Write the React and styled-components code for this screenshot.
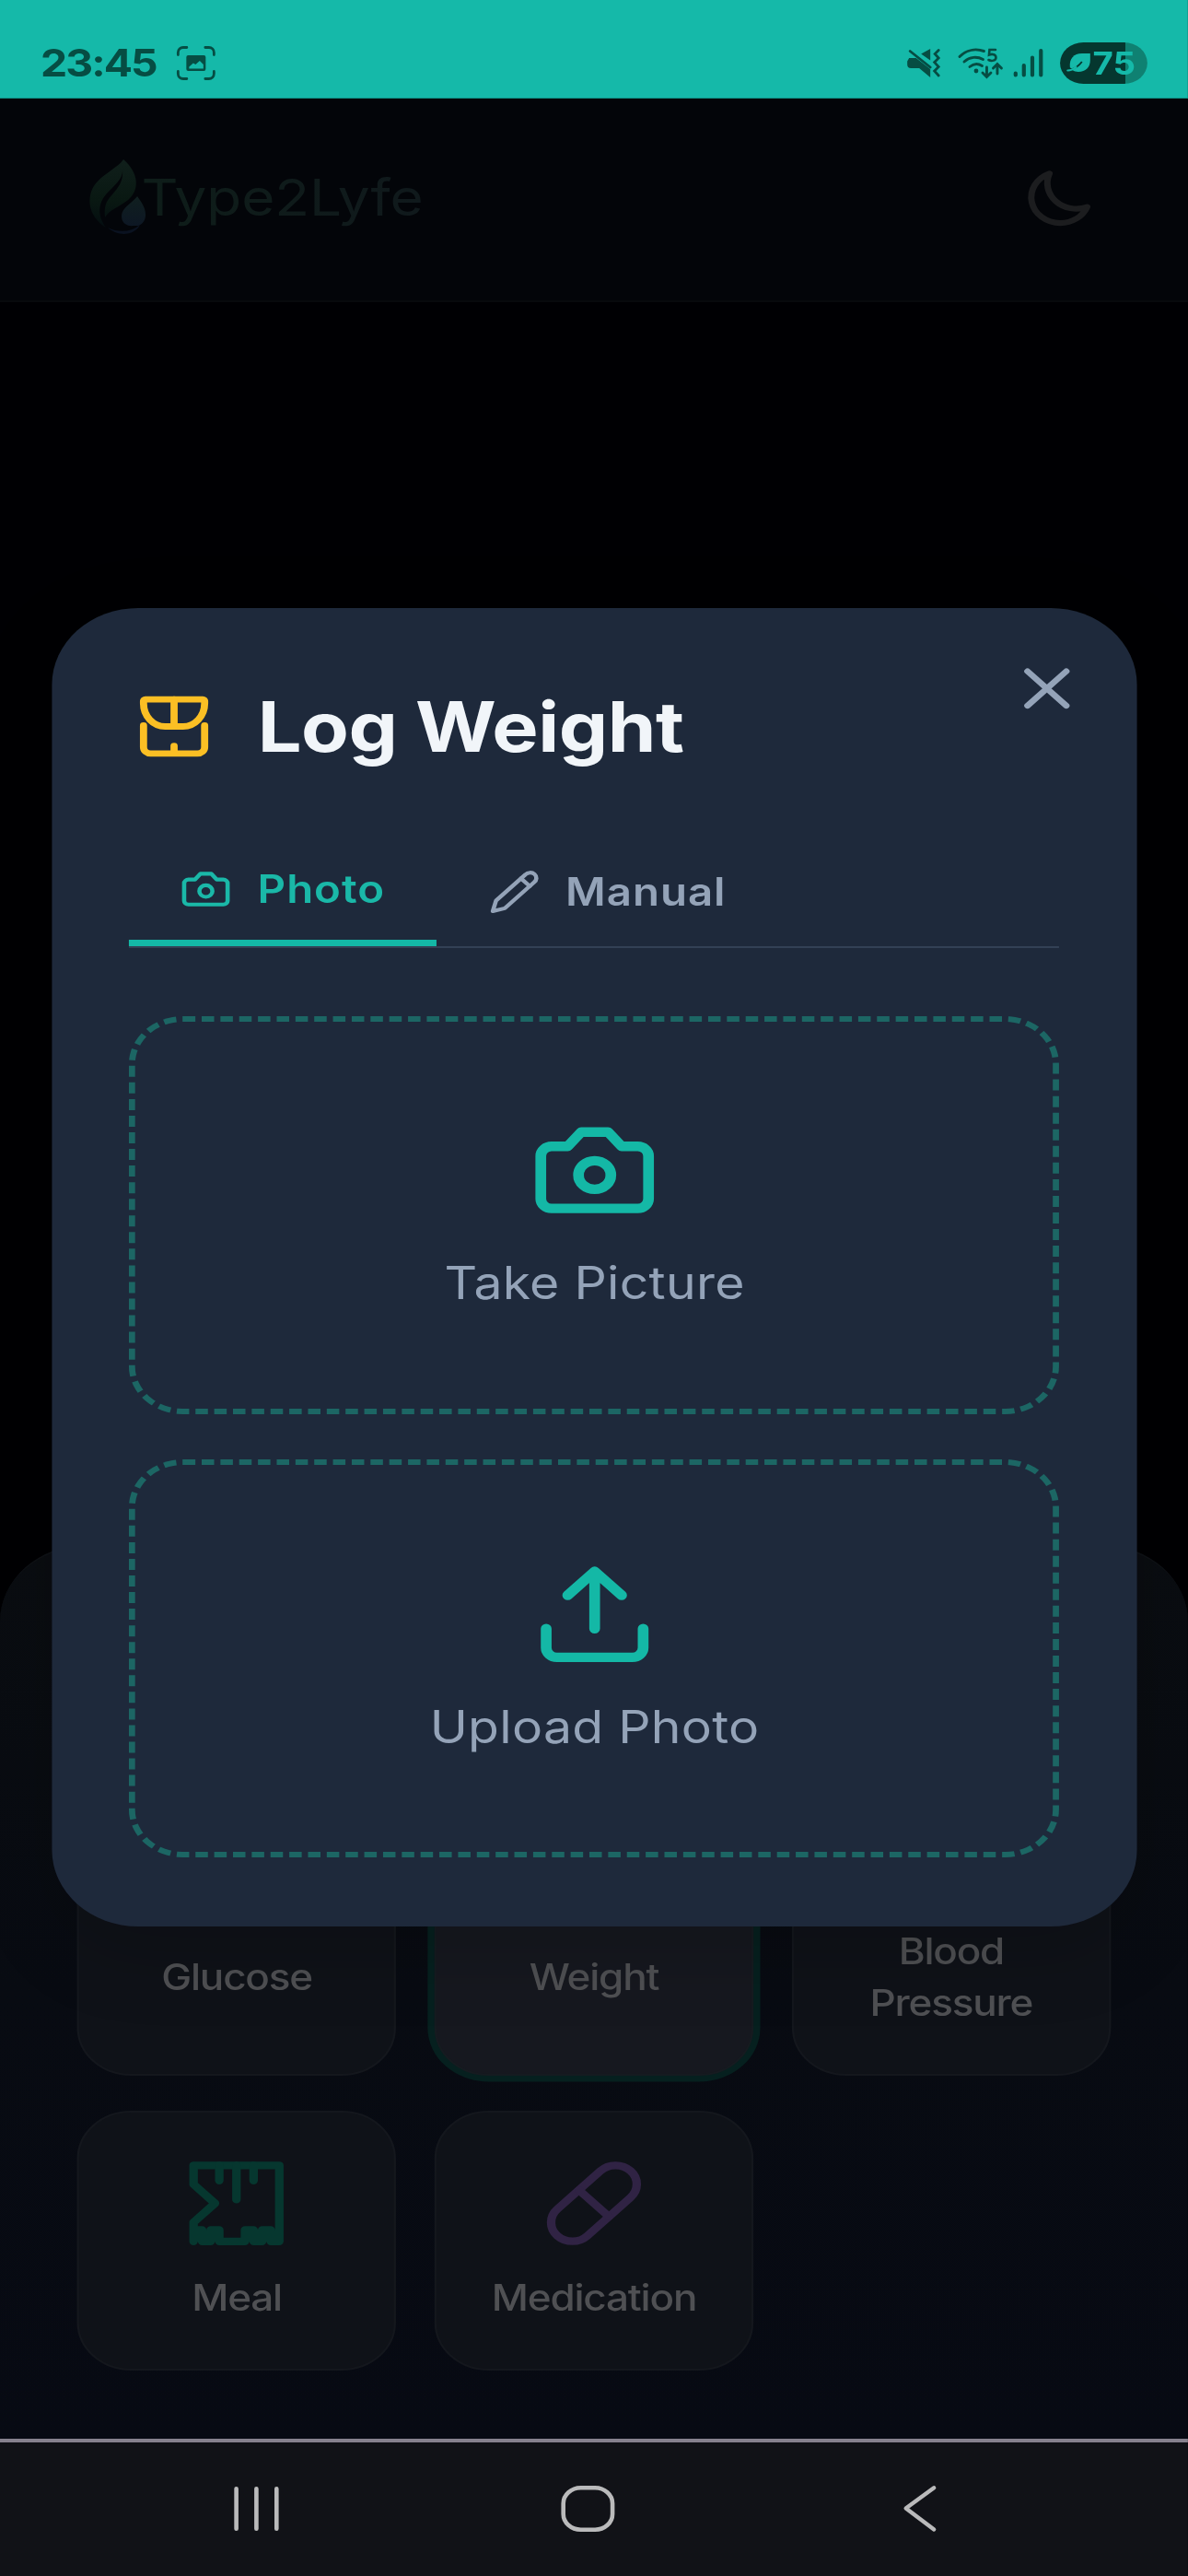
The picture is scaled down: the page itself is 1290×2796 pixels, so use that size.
import React from "react";
import styled, { createGlobalStyle } from "styled-components";

const STRETCH = 1.1285;
const w = (n) => `${(n / STRETCH).toFixed(2)}px`;

const GlobalStyle = createGlobalStyle`
  *, *::before, *::after { box-sizing: border-box; }
  html, body { margin: 0; padding: 0; background: #000003; }
  body { width: 1290px; height: 2796px; overflow: hidden; }
  button { font: inherit; color: inherit; background: none; border: 0; padding: 0; margin: 0; }
`;

const Screen = styled.div`
  position: relative;
  display: flex;
  flex-direction: column;
  width: ${w(1290)};
  height: 2796px;
  transform: scaleX(${STRETCH});
  transform-origin: 0 0;
  background: #000003;
  font-family: Inter, "Liberation Sans", sans-serif;
  overflow: hidden;
`;

/* ---------- status bar ---------- */
const StatusBar = styled.header`
  display: flex;
  align-items: center;
  height: 107px;
  flex: none;
  padding: 30px ${w(44)} 0 ${w(44)};
  background: #15b9a9;
  border-bottom: 1px solid #0e8f83;
  color: #064d43;
`;

const Clock = styled.span`
  width: ${w(148)};
  font-size: 41px;
  font-weight: 700;
  line-height: 44px;
  letter-spacing: -1.7px;
`;

const StatusIcons = styled.div`
  display: flex;
  align-items: center;
  margin-left: auto;
`;

const Glyph = styled.svg`
  display: block;
  flex: none;
  width: ${(p) => w(p.$w)};
  height: ${(p) => p.$h}px;
  margin-left: ${(p) => w(p.$gap || 0)};
  overflow: visible;
`;

const Battery = styled.div`
  display: flex;
  align-items: center;
  width: ${w(95)};
  height: 45px;
  margin-left: ${w(18)};
  padding-left: ${w(7)};
  border-radius: 23px;
  background: linear-gradient(90deg, #05372f 0 74.5%, #0f8172 74.5%);
  color: #15b9a9;
  font-size: 34px;
  font-weight: 700;
  line-height: 45px;
`;

const BatteryValue = styled.span`
  margin-left: ${w(1.5)};
`;

/* ---------- app header ---------- */
const AppBar = styled.div`
  display: flex;
  align-items: center;
  justify-content: space-between;
  flex: none;
  height: 221px;
  padding: 0 ${w(97)} 5px;
  background: #030509;
  border-bottom: 2px solid #07090c;
`;

const Brand = styled.div`
  display: flex;
  align-items: center;
`;

const BrandName = styled.span`
  margin-left: ${w(-7.5)};
  font-size: 55px;
  line-height: 66px;
  letter-spacing: -0.1px;
  background: linear-gradient(90deg, #0e1d19, #10191c);
  -webkit-background-clip: text;
  background-clip: text;
  color: transparent;
`;

const LineIcon = styled.svg`
  display: block;
  flex: none;
  width: ${(p) => p.$size}px;
  height: ${(p) => p.$size}px;
  fill: none;
  stroke: ${(p) => p.$color || "currentColor"};
  stroke-width: ${(p) => p.$stroke || 2};
  stroke-linecap: round;
  stroke-linejoin: round;
`;

/* ---------- bottom sheet with entry types ---------- */
const Body = styled.main`
  display: flex;
  flex-direction: column;
  justify-content: flex-end;
  flex: 1;
`;

const Sheet = styled.section`
  height: 970px;
  padding: 237px ${w(84)} 0;
  border-radius: 83px 83px 0 0;
  border-top: 2px solid #0f1216;
  background: linear-gradient(180deg, #0a0d11, #080b12 50%, #070a13);
`;

const Grid = styled.div`
  display: grid;
  grid-template-columns: repeat(3, 1fr);
  grid-template-rows: 337px 281.6px;
  gap: 38.4px 37px;
`;

const Card = styled.button`
  display: flex;
  flex-direction: column;
  align-items: center;
  justify-content: center;
  gap: 24.5px;
  padding: 0 40px 1px;
  border: 2px solid ${(p) => (p.$selected ? "#161b20" : "#14171d")};
  border-radius: 52px;
  background: ${(p) => (p.$selected ? "#16181f" : "#0f1218")};
  box-shadow: ${(p) => (p.$selected ? "0 0 0 6.5px #06201f" : "none")};
  color: #4f5053;
  font-size: 39px;
  font-weight: 500;
  line-height: 55.5px;
  letter-spacing: -1.05px;
`;

/* ---------- dialog ---------- */
const Overlay = styled.div`
  position: absolute;
  inset: 0;
  padding: 660px ${w(56)} 0;
`;

const Dialog = styled.section`
  position: relative;
  display: flex;
  flex-direction: column;
  height: 1430.6px;
  padding: 74.4px ${w(84)};
  border-radius: 83px;
  background: #1e293b;
  box-shadow: 0 26px 80px rgba(0, 0, 0, 0.18);
`;

const DialogHead = styled.div`
  display: flex;
  align-items: center;
  height: 110px;
  padding-left: ${w(2)};
`;

const Title = styled.h1`
  margin: 0 0 0 ${w(44)};
  color: #f1f5f9;
  font-size: 75px;
  font-weight: 700;
  line-height: 90px;
  letter-spacing: -0.4px;
`;

const CloseButton = styled.button`
  position: absolute;
  top: 49.5px;
  right: ${w(55)};
  color: #94a3b8;
`;

const Tabs = styled.nav`
  display: flex;
  height: 120.5px;
  margin-top: 66px;
  border-bottom: 2.4px solid #334155;
`;

const Tab = styled.button`
  display: flex;
  align-items: center;
  height: ${(p) => (p.$active ? 118 : 117)}px;
  width: ${(p) => w(p.$width)};
  padding-left: ${w(55.5)};
  gap: ${w(27.5)};
  border-bottom: ${(p) => (p.$active ? "7px solid #14b8a6" : "0 solid transparent")};
  color: ${(p) => (p.$active ? "#1ab8a8" : "#94a3b8")};
  font-size: 42px;
  font-weight: 600;
  line-height: 62px;
  letter-spacing: 0.85px;
`;

const Choices = styled.div`
  display: flex;
  flex-direction: column;
  gap: 49.5px;
  margin-top: 73.5px;
`;

const DropZone = styled.button`
  display: flex;
  flex-direction: column;
  align-items: center;
  justify-content: center;
  gap: 25px;
  height: 432px;
  padding-left: 1px;
  border: 6px dashed #1c6664;
  border-radius: 52px;
  color: #94a3b8;
  font-size: 49px;
  line-height: 72px;
  letter-spacing: 0.25px;
`;

/* ---------- system navigation ---------- */
const NavBar = styled.footer`
  display: flex;
  align-items: center;
  flex: none;
  height: 149px;
  padding: 0 0 2px ${w(254)};
  border-top: 4px solid #86818e;
  background: #111217;
`;

function CameraIcon(props) {
  return (
    <LineIcon viewBox="0 0 24 24" {...props}>
      <path d="M14.5 4h-5L7 7H4a2 2 0 0 0-2 2v9a2 2 0 0 0 2 2h16a2 2 0 0 0 2-2V9a2 2 0 0 0-2-2h-3l-2.5-3z" />
      <circle cx="12" cy="13" r="3" />
    </LineIcon>
  );
}

function UploadIcon(props) {
  return (
    <LineIcon viewBox="0 0 24 24" {...props}>
      <path d="M21 15v4a2 2 0 0 1-2 2H5a2 2 0 0 1-2-2v-4" />
      <path d="M17 8l-5-5-5 5M12 3v12" />
    </LineIcon>
  );
}

function PencilIcon(props) {
  return (
    <LineIcon viewBox="0 0 24 24" {...props}>
      <path d="M17 3a2.85 2.83 0 1 1 4 4L7.5 20.5 2 22l1.5-5.5Z" />
      <path d="m15 5 4 4" />
    </LineIcon>
  );
}

function ScaleIcon(props) {
  return (
    <LineIcon viewBox="0 0 24 24" {...props}>
      <path d="M4 3.5h16a.5.5 0 0 1 .5.5v.8c0 4-2.700 7.200-6 7.200h-5c-3.300 0-6-3.200-6-7.200V4a.5.5 0 0 1 .5-.5Z" />
      <path d="M12 3.500V12M3.500 11.700v6.800a2 2 0 0 0 2 2h13a2 2 0 0 0 2-2v-6.800M12 18.100v2.400" />
    </LineIcon>
  );
}

function MealIcon(props) {
  return (
    <LineIcon viewBox="0 0 24 24" {...props}>
      <path d="M2 17v5M2 19h2v3h2v-3h2v3h6v-3h2v3h2v-3h2v3h2V2H2v5l5 5-5 5v2" />
      <path d="M8 2v4M12 2v9M16 2v4" />
    </LineIcon>
  );
}

function PillIcon(props) {
  return (
    <LineIcon viewBox="0 0 24 24" {...props}>
      <path d="m10.5 20.5 10-10a4.950 4.950 0 1 0-7-7l-10 10a4.950 4.950 0 1 0 7 7Z" />
      <path d="m8.500 8.500 7 7" />
    </LineIcon>
  );
}

function DropIcon(props) {
  return (
    <LineIcon viewBox="0 0 24 24" {...props}>
      <path d="M12 22a7 7 0 0 0 7-7c0-2-1-3.900-3-5.500S12.500 5 12 2.500C11.500 5 10 7.900 8 9.500S5 13 5 15a7 7 0 0 0 7 7z" />
    </LineIcon>
  );
}

function HeartIcon(props) {
  return (
    <LineIcon viewBox="0 0 24 24" {...props}>
      <path d="M19 14c1.500-1.500 3-3.200 3-5.500A5.500 5.500 0 0 0 16.500 3c-1.800 0-3 .5-4.500 2-1.500-1.500-2.700-2-4.500-2A5.500 5.500 0 0 0 2 8.500c0 2.300 1.500 4 3 5.500l7 7Z" />
    </LineIcon>
  );
}

function Logo() {
  return (
    <Glyph $w={64} $h={82} viewBox="0 0 64 82" preserveAspectRatio="none">
      <defs>
        <linearGradient id="leaf" x1="0" y1="0" x2="0" y2="1">
          <stop offset="0" stopColor="#101f1b" />
          <stop offset="0.6" stopColor="#091812" />
          <stop offset="1" stopColor="#040d10" />
        </linearGradient>
        <linearGradient id="drop" x1="0" y1="0" x2="0" y2="1">
          <stop offset="0" stopColor="#101f1f" />
          <stop offset="1" stopColor="#0d1724" />
        </linearGradient>
      </defs>
      <path fill="url(#leaf)" d="M37 0C31 10 8 18 2 35c-5 16 2 30 16 39C10 63 8 50 18 38 27 28 36 22 36 12c1 12-5 19-11 26-8 8-9 15-8 25C21 55 32 52 42 44 54 34 55 16 37 0Z" />
      <path fill="url(#drop)" d="M52 40C47 47 35 52 35 62c0 7 6 11 13 10h5c5-2 8-6 8-12 0-8-5-14-9-20Z" />
      <path fill="#0a1220" d="M55 71C45 79 32 80 20 74c12 11 30 8 35-3Z" />
    </Glyph>
  );
}

const entryTypes = [
  { label: "Glucose", Icon: DropIcon, color: "#3a1418" },
  { label: "Weight", Icon: ScaleIcon, color: "#3d2f0c", selected: true },
  { label: "Blood Pressure", Icon: HeartIcon, color: "#3a1418" },
  { label: "Meal", Icon: MealIcon, color: "#06372f" },
  { label: "Medication", Icon: PillIcon, color: "#302344" },
];

export default function App() {
  return (
    <>
      <GlobalStyle />
      <Screen>
        <StatusBar>
          <Clock>23:45</Clock>
          <Glyph $w={42} $h={37} viewBox="0 0 42 37" preserveAspectRatio="none">
            <g fill="none" stroke="currentColor" strokeWidth="2.8" strokeLinecap="round">
              <path d="M1.500 9.500V7a5.500 5.500 0 0 1 5.500-5.500h4M31 1.500h4A5.500 5.500 0 0 1 40.500 7v2.500M40.500 27.500V30a5.500 5.500 0 0 1-5.500 5.500h-4M11 35.500H7A5.500 5.500 0 0 1 1.500 30v-2.500" />
            </g>
            <path fill="currentColor" fillRule="evenodd" d="M12.500 10h17a2 2 0 0 1 2 2v13a2 2 0 0 1-2 2h-17a2 2 0 0 1-2-2V12a2 2 0 0 1 2-2Zm1 14.500h15.500v-4.500l-4-4-4.500 4-2.500-1.500-4.500 4Z" />
          </Glyph>
          <StatusIcons>
            <Glyph $w={35} $h={31} viewBox="0 0 35 31" preserveAspectRatio="none">
              <path fill="currentColor" d="M25 0v12.500L15 5.500ZM2 10h7.500L25 22v9L13 21H4a4 4 0 0 1-4-4v-3.500Z" />
              <path fill="none" stroke="currentColor" strokeWidth="2.800" strokeLinecap="round" d="M3 2.500 25 20M34 1.500l-4 4 4 4.500-4.500 4.500 4.500 5-4.500 4.500 4.500 5" />
            </Glyph>
            <Glyph $w={49} $h={33} $gap={20} viewBox="0 0 49 33" preserveAspectRatio="none">
              <g fill="none" stroke="currentColor" strokeWidth="2.900" strokeLinecap="round">
                <path d="M1.500 9.500C9 2 19 .5 28 3.500M6.500 15c6-5.500 14-6 20.500-2.500M12.500 20.500c4-3.500 9-4 13.500-1" />
                <path d="M31 21v9.500M26.500 27l4.500 4.500 4.500-4.500M42.500 28v-9.500M38 22l4.500-4.500L47 22" />
                <path strokeWidth="2.600" d="M40.500 2H34l-.5 5.500c4-1.500 7.500 0 7.500 3s-4.500 4.500-8 2.500" />
              </g>
              <circle cx="19.500" cy="25" r="2.400" fill="currentColor" />
            </Glyph>
            <Glyph $w={33} $h={31} $gap={11} viewBox="0 0 33 31" preserveAspectRatio="none">
              <g stroke="currentColor" strokeWidth="4.200" strokeLinecap="round">
                <path d="M2.500 26.500v2M11.500 18v10.500M20.700 9.500v19M30 2v26.500" />
              </g>
            </Glyph>
            <Battery>
              <Glyph $w={27} $h={20} viewBox="0 0 27 20" preserveAspectRatio="none">
                <path fill="currentColor" d="M4 15C3 6 8 0 17 0h9v7c0 8-5 13-13 13-2.500 0-4.500-.6-6-1.700Z" />
                <path fill="none" stroke="#05372f" strokeWidth="1.800" d="M5 17.500C10 16 14 13 17 9" />
                <path fill="none" stroke="currentColor" strokeWidth="2.200" strokeLinecap="round" d="M1.500 18.500C5 18.500 8 17 10.500 15" />
              </Glyph>
              <BatteryValue>75</BatteryValue>
            </Battery>
          </StatusIcons>
        </StatusBar>

        <AppBar>
          <Brand>
            <Logo />
            <BrandName>Type2Lyfe</BrandName>
          </Brand>
          <LineIcon viewBox="0 0 24 24" $size={74.4} $color="#1c1d1f">
            <path d="M20.354 15.354A9 9 0 0 1 8.646 3.646 9.003 9.003 0 0 0 12 21a9.003 9.003 0 0 0 8.354-5.646z" />
          </LineIcon>
        </AppBar>

        <Body>
          <Sheet>
            <Grid>
              {entryTypes.map(({ label, Icon, color, selected }) => (
                <Card key={label} $selected={selected}>
                  <Icon $size={99} $color={color} />
                  <span>{label}</span>
                </Card>
              ))}
            </Grid>
          </Sheet>
        </Body>

        <NavBar>
          <Glyph $w={49} $h={48} viewBox="0 0 49 48" preserveAspectRatio="none">
            <path stroke="#bababb" strokeWidth="4.600" strokeLinecap="round" d="M2.700 2.300v43.400M24.500 2.300v43.400M46.400 2.300v43.400" />
          </Glyph>
          <Glyph $w={58} $h={50} $gap={306} viewBox="0 0 58 50" preserveAspectRatio="none">
            <rect x="2.300" y="2.300" width="53.400" height="45.400" rx="19" ry="17" fill="none" stroke="#bababb" strokeWidth="4.600" />
          </Glyph>
          <Glyph $w={36} $h={50} $gap={314} viewBox="0 0 36 50" preserveAspectRatio="none">
            <path d="M33.500 2.300 3 24.500l30.500 23" fill="none" stroke="#bababb" strokeWidth="4.400" strokeLinecap="round" strokeLinejoin="round" />
          </Glyph>
        </NavBar>

        <Overlay>
          <Dialog>
            <DialogHead>
              <ScaleIcon $size={83} $color="#fbbf24" />
              <Title>Log Weight</Title>
            </DialogHead>
            <CloseButton aria-label="Close">
              <LineIcon viewBox="0 0 24 24" $size={74.7}>
                <path d="M18 6 6 18M6 6l12 12" />
              </LineIcon>
            </CloseButton>
            <Tabs>
              <Tab $active $width={334.5}>
                <CameraIcon $size={50.2} $stroke={1.95} />
                <span>Photo</span>
              </Tab>
              <Tab $width={370}>
                <PencilIcon $size={50.2} $stroke={1.95} />
                <span>Manual</span>
              </Tab>
            </Tabs>
            <Choices>
              <DropZone>
                <CameraIcon $size={124.4} $color="#14b8a6" />
                <span>Take Picture</span>
              </DropZone>
              <DropZone>
                <UploadIcon $size={124.4} $color="#14b8a6" />
                <span>Upload Photo</span>
              </DropZone>
            </Choices>
          </Dialog>
        </Overlay>
      </Screen>
    </>
  );
}
